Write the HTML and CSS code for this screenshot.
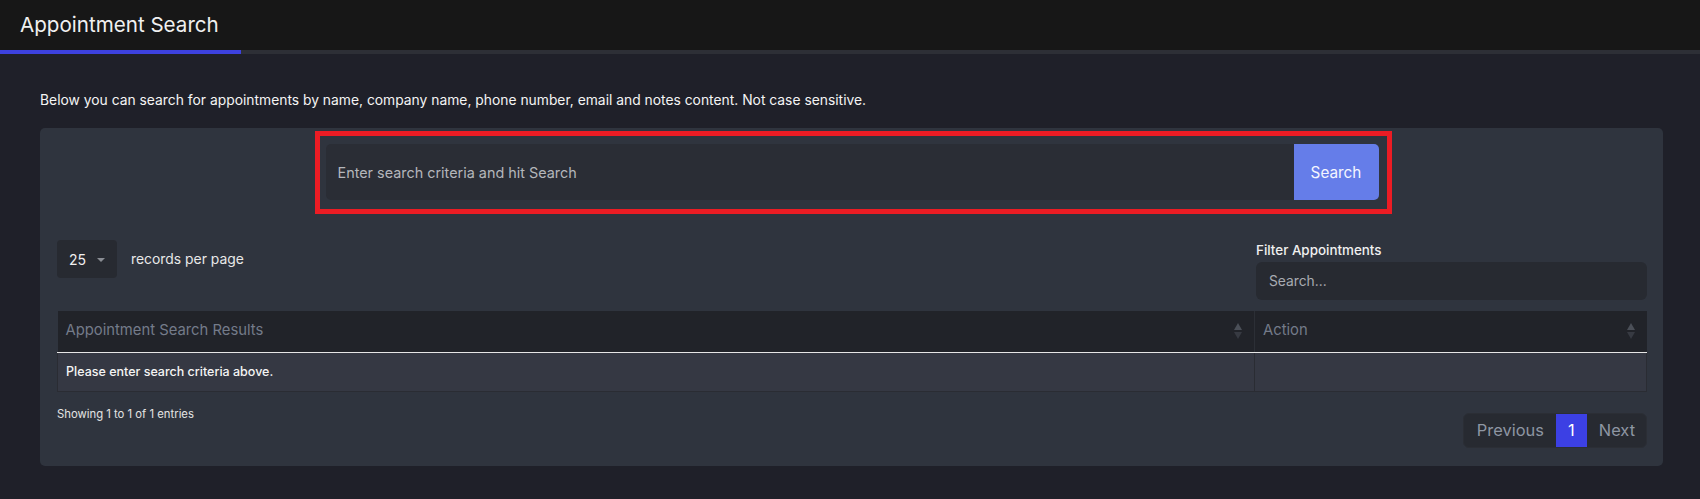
FILE: index.html
```html
<!DOCTYPE html>
<html lang="en">
<head>
<meta charset="utf-8">
<title>Appointment Search</title>
<link rel="stylesheet" href="styles.css">
</head>
<body>
<header class="topbar">
  <h1 class="page-title">Appointment Search</h1>
</header>
<div class="tabbar"><div class="tab-active"></div></div>
<main class="main">
  <p class="intro">Below you can search for appointments by name, company name, phone number, email and notes content. Not case sensitive.</p>
  <section class="card">
    <div class="search-highlight">
      <div class="search-group">
        <div class="search-input">Enter search criteria and hit Search</div>
        <div class="search-btn">Search</div>
      </div>
    </div>
    <div class="controls">
      <div class="length">
        <div class="length-select"><span>25</span><span class="caret"></span></div>
        <span class="length-label">records per page</span>
      </div>
      <div class="filter">
        <div class="filter-label">Filter Appointments</div>
        <div class="filter-input">Search...</div>
      </div>
    </div>
    <table class="results">
      <thead>
        <tr>
          <th class="col-main"><span>Appointment Search Results</span><span class="sort"><i class="up"></i><i class="down"></i></span></th>
          <th class="col-action"><span>Action</span><span class="sort"><i class="up"></i><i class="down"></i></span></th>
        </tr>
      </thead>
      <tbody>
        <tr>
          <td>Please enter search criteria above.</td>
          <td></td>
        </tr>
      </tbody>
    </table>
    <div class="footer">
      <div class="info">Showing 1 to 1 of 1 entries</div>
      <div class="pager">
        <span class="page-item">Previous</span>
        <span class="page-item active">1</span>
        <span class="page-item">Next</span>
      </div>
    </div>
  </section>
</main>
</body>
</html>
```
FILE: styles.css
```css
* { box-sizing: border-box; }
html, body { margin: 0; padding: 0; }
body {
  background: #1f2029;
  font-family: Inter, "Open Sans", sans-serif;
  color: #f2f2f2;
}
.topbar {
  height: 50px;
  background: #171717;
  display: flex;
  align-items: center;
  padding-left: 20px;
}
.page-title {
  margin: 0;
  font-size: 20.6px;
  font-weight: 400;
  color: #f0f0f0;
  line-height: 24px;
}
.tabbar {
  height: 4px;
  background: #2d2f36;
}
.tab-active {
  width: 241px;
  height: 4px;
  background: #3d41df;
}
.main {
  padding: 36px 37px 0 40px;
}
.intro {
  margin: 0;
  font-size: 13.85px;
  line-height: 20px;
  color: #f4f4f4;
  font-weight: 400;
}
.card {
  margin-top: 18px;
  background: #2f343e;
  border-radius: 5px;
  padding: 3px 16px 18px 17px;
}
.search-highlight {
  width: 1077px;
  margin: 0 auto;
  border: 5px solid #ec1c24;
  padding: 8px 8px 9px 6px;
  position: relative;
  left: 1px;
}
.search-group {
  display: flex;
  height: 56px;
}
.search-input {
  flex: 1;
  background: #2a2d35;
  border-radius: 5px 0 0 5px;
  display: flex;
  align-items: center;
  padding-left: 12px;
  font-size: 14.4px;
  color: #b4b6bb;
}
.search-btn {
  width: 85px;
  background: #657de9;
  border-radius: 0 5px 5px 0;
  display: flex;
  align-items: center;
  justify-content: center;
  font-size: 15.3px;
  color: #f4f6ff;
}
.controls {
  display: flex;
  justify-content: space-between;
  align-items: flex-start;
  margin-top: 26px;
}
.length {
  display: flex;
  align-items: center;
  gap: 14px;
}
.length-select {
  width: 60px;
  height: 38px;
  background: #272a31;
  border-radius: 4px;
  display: flex;
  align-items: center;
  padding-left: 12px;
  gap: 11px;
  font-size: 14px;
  color: #f0f0f0;
}
.caret {
  width: 0;
  height: 0;
  border-left: 4px solid transparent;
  border-right: 4px solid transparent;
  border-top: 4px solid #8a8d94;
  margin-top: 1px;
}
.length-label {
  font-size: 13.9px;
  color: #e8e8e8;
}
.filter {
  width: 391px;
}
.filter-label {
  font-size: 13.4px;
  line-height: 19px;
  margin-top: 1px;
  color: #f0f0f0;
  font-weight: 500;
}
.filter-input {
  margin-top: 2px;
  height: 38px;
  background: #272a31;
  border-radius: 6px;
  display: flex;
  align-items: center;
  padding-left: 13px;
  font-size: 13.8px;
  color: #a8abb2;
}
.results {
  width: 100%;
  margin-top: 11px;
  border-collapse: collapse;
  table-layout: fixed;
}
.results th {
  position: relative;
  height: 41px;
  background: #212329;
  border-bottom: 1px solid #e6e6e6;
  text-align: left;
  vertical-align: middle;
  font-weight: 400;
  font-size: 14.8px;
  color: #747b8a;
  padding: 0 9px 3px 8px;
}
.col-main { width: 1197px; }
.results th + th { border-left: 1px solid #2c2f36; }
.sort {
  position: absolute;
  right: 12px;
  top: 12px;
  display: flex;
  flex-direction: column;
  gap: 2px;
}
.sort i {
  display: block;
  width: 0;
  height: 0;
  border-left: 4px solid transparent;
  border-right: 4px solid transparent;
}
.sort .up { border-bottom: 7px solid #4b4f58; }
.sort .down { border-top: 7px solid #373a42; }
.results td {
  height: 39px;
  background: #353843;
  border: 1px solid #2a2c33;
  border-top: 0;
  font-size: 12.5px;
  font-weight: 500;
  color: #f4f4f4;
  padding: 0 8px;
}
.footer {
  display: flex;
  justify-content: space-between;
  align-items: flex-start;
  margin-top: 13px;
}
.info {
  font-size: 11.3px;
  line-height: 18px;
  color: #e4e4e4;
}
.pager {
  margin-top: 8px;
  display: flex;
  height: 35px;
  background: #272a31;
  border: 1px solid #2b2e35;
  border-radius: 6px;
  overflow: hidden;
}
.page-item {
  display: flex;
  align-items: center;
  padding: 0 12px;
  font-size: 16.4px;
  color: #8e96a3;
}
.page-item:first-child { padding: 0 12px 0 13px; }
.page-item:last-child { padding: 0 11px 0 12px; }
.page-item.active {
  background: #3c40e4;
  color: #ffffff;
  width: 31px;
  padding: 0;
  justify-content: center;
}
```
